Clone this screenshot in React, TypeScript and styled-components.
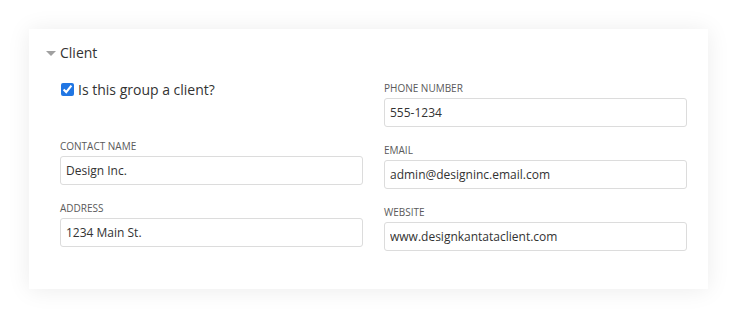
import React from 'react';
import styled, { createGlobalStyle } from 'styled-components';

const GlobalStyle = createGlobalStyle`
  body {
    margin: 0;
    background: #ffffff;
    font-family: 'Open Sans', 'Noto Sans', sans-serif;
    color: #333;
  }
`;

type Field = { label: string; value: string };

const leftFields: Field[] = [
  { label: 'Contact Name', value: 'Design Inc.' },
  { label: 'Address', value: '1234 Main St.' },
];

const rightFields: Field[] = [
  { label: 'Phone Number', value: '555-1234' },
  { label: 'Email', value: 'admin@designinc.email.com' },
  { label: 'Website', value: 'www.designkantataclient.com' },
];

// Component
const App: React.FC = () => {
  return (
    <Page>
      <GlobalStyle />
      <Card>
        <SectionHeader>
          <Caret />
          <SectionTitle>Client</SectionTitle>
        </SectionHeader>

        <Columns>
          <Column>
            <CheckRow>
              <Checkbox type="checkbox" defaultChecked />
              <CheckLabel>Is this group a client?</CheckLabel>
            </CheckRow>
            <Fields>
              {leftFields.map(f => (
                <FieldGroup key={f.label}>
                  <FieldLabel>{f.label}</FieldLabel>
                  <TextInput type="text" defaultValue={f.value} />
                </FieldGroup>
              ))}
            </Fields>
          </Column>

          <Column offset={2}>
            <Fields>
              {rightFields.map(f => (
                <FieldGroup key={f.label}>
                  <FieldLabel>{f.label}</FieldLabel>
                  <TextInput type="text" defaultValue={f.value} />
                </FieldGroup>
              ))}
            </Fields>
          </Column>
        </Columns>
      </Card>
    </Page>
  );
};

// Styled components
const Page = styled.div`
  padding: 29px 27px 26px 29px;
`;

const Card = styled.section`
  background: #fff;
  box-shadow: 0 1px 22px rgba(0, 0, 0, 0.08);
  padding: 14px 21px 38px 17px;
`;

const SectionHeader = styled.div`
  display: flex;
  align-items: center;
  height: 20px;
  line-height: 20px;
`;

const Caret = styled.span`
  width: 0;
  height: 0;
  border-left: 5px solid transparent;
  border-right: 5px solid transparent;
  border-top: 5px solid #a0a0a0;
  margin: 1px 4px 0 0;
`;

const SectionTitle = styled.span`
  font-size: 14px;
  color: #333;
`;

const Columns = styled.div`
  display: grid;
  grid-template-columns: 303px 303px;
  column-gap: 21px;
  margin: 16px 0 0 14px;
`;

const Column = styled.div<{ offset?: number }>`
  display: flex;
  flex-direction: column;
  padding-top: ${props => props.offset || 0}px;
`;

const CheckRow = styled.label`
  display: flex;
  align-items: center;
  height: 20px;
  gap: 4px;
  margin: 0 0 40px 1px;
`;

const Checkbox = styled.input`
  width: 13px;
  height: 13px;
  margin: 0;
  accent-color: #2176e3;
`;

const CheckLabel = styled.span`
  font-size: 14px;
  color: #333;
`;

const Fields = styled.div`
  display: flex;
  flex-direction: column;
  gap: 16px;
`;

const FieldGroup = styled.div`
  display: flex;
  flex-direction: column;
  gap: 3px;
`;

const FieldLabel = styled.div`
  font-size: 10px;
  line-height: 14px;
  text-transform: uppercase;
  color: #5a5a5a;
`;

const TextInput = styled.input`
  box-sizing: border-box;
  width: 100%;
  height: 29px;
  padding: 0 5px;
  border: 1px solid #dcdcdc;
  border-radius: 3px;
  font-family: 'Open Sans', 'Noto Sans', sans-serif;
  font-size: 12px;
  color: #333;
  background: #fff;
  outline: none;
`;

export default App;
